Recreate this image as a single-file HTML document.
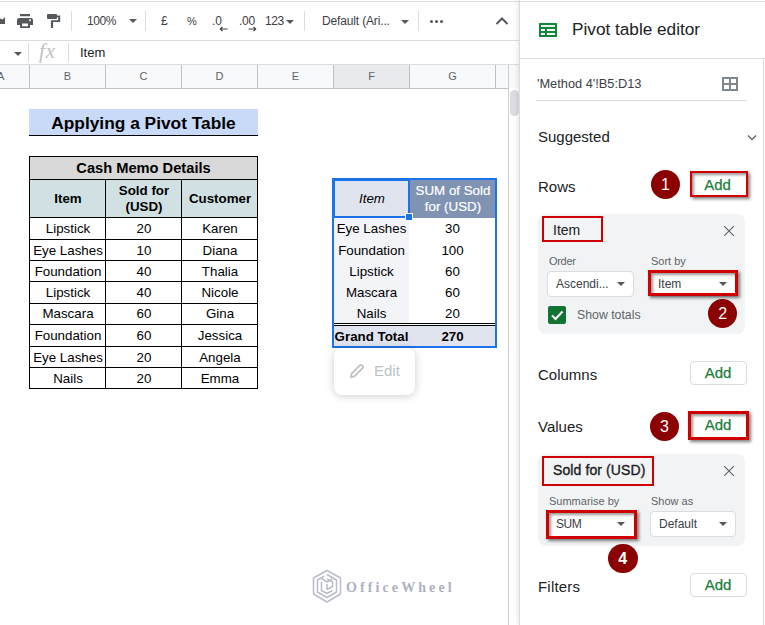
<!DOCTYPE html>
<html><head><meta charset="utf-8">
<style>
*{box-sizing:border-box;margin:0;padding:0}
html,body{width:765px;height:625px;overflow:hidden;background:#fff;font-family:"Liberation Sans",sans-serif;color:#000}
.abs{position:absolute}
#root{position:relative;width:765px;height:625px;overflow:hidden;background:#fff}
/* toolbar */
#tb{left:0;top:0;width:520px;height:41px;background:#fff;border-bottom:1px solid #dadce0}
.tbt{position:absolute;top:13px;font-size:12px;color:#3c4043;line-height:16px;white-space:nowrap}
.sep{position:absolute;top:11px;width:1px;height:20px;background:#dadce0}
.caret{position:absolute;width:0;height:0;border-left:4px solid transparent;border-right:4px solid transparent;border-top:4px solid #55585d}
/* formula bar */
#fb{left:0;top:41px;width:520px;height:24px;background:#fff;border-bottom:1px solid #dadce0}
/* col headers */
#ch{left:0;top:65px;width:509px;height:24px;background:#f8f9fa;border-bottom:1px solid #c0c0c0}
.chd{position:absolute;top:0;height:23px;border-right:1px solid #c0c0c0;font-size:11px;color:#5f6368;text-align:center;line-height:23px}
/* cells */
.c{position:absolute;font-size:13.33px;line-height:16px;text-align:center;white-space:nowrap;color:#000}
.b{font-weight:bold}
.ln{position:absolute;background:#000}
/* sidebar */
#sb{left:520px;top:0;width:245px;height:625px;background:#fff;box-shadow:-1px 0 0 #dadce0,-3px 0 4px rgba(0,0,0,.08)}
.st{position:absolute;font-size:15px;color:#202124;line-height:18px;white-space:nowrap}
.sl{position:absolute;font-size:11px;color:#5f6368;line-height:14px;white-space:nowrap}
.card{position:absolute;background:#f1f3f4;border-radius:8px}
.add{position:absolute;width:57px;height:24px;border:1px solid #dadce0;border-radius:4px;background:#fff;color:#188038;font-size:15px;line-height:22px;text-align:center;-webkit-text-stroke:.25px #188038;padding-right:1px}
.red{position:absolute;border:2px solid #d00000;box-shadow:2px 2px 3px rgba(0,0,0,.5),inset 2px 2px 3px rgba(0,0,0,.4)}
.circ{position:absolute;width:29.600px;height:29.600px;border-radius:50%;background:#8b0000;color:#fff;font-size:16px;line-height:30px;text-align:center}
.sel{position:absolute;height:26px;border:1px solid #dadce0;border-radius:4px;background:#fff;font-size:12px;color:#3c4043;line-height:24px;padding-left:8px}
</style></head><body>
<div id="root">

<!-- toolbar -->
<div id="tb" class="abs">
  <div class="abs" style="left:0;top:1px;width:765px;height:1px;background:#dcdee1"></div>
  <svg class="abs" style="left:0;top:14px" width="6" height="12" viewBox="0 0 6 12"><path d="M0 4.500 L2.500 5.500 L5 3 L5 10 L0 10 Z" fill="#55585d"/></svg>
  <!-- print -->
  <svg class="abs" style="left:17px;top:14px" width="16" height="14" viewBox="0 0 16 14"><path fill="#55585d" fill-rule="evenodd" d="M3 0h10v2.300H3z M2.200 4h11.600A2.200 2.200 0 0 1 16 6.200V11h-3v3H3v-3H0V6.200A2.200 2.200 0 0 1 2.200 4z M5 9.500v2.700h6V9.500z M13 5.300a.9.900 0 1 0 .01 0z"/></svg>
  <!-- paint -->
  <svg class="abs" style="left:47px;top:14px" width="14" height="14" viewBox="0 0 14 14"><path fill="#55585d" d="M1 0h8a1 1 0 0 1 1 1v.500h3.200V8H6.100v6H3.900V6.200h7.300V3.200H10V4a1 1 0 0 1-1 1H1a1 1 0 0 1-1-1V1a1 1 0 0 1 1-1z"/></svg>
  <div class="sep" style="left:71px"></div>
  <div class="tbt" style="left:87px;letter-spacing:-.45px">100%</div>
  <div class="caret" style="left:129px;top:19px"></div>
  <div class="sep" style="left:145px"></div>
  <div class="tbt" style="left:161px">£</div>
  <div class="tbt" style="left:187px;font-size:11px">%</div>
  <div class="tbt" style="left:212px">.0</div>
  <svg class="abs" style="left:219px;top:26px" width="9" height="6" viewBox="0 0 9 6"><path d="M8.500 3H1.500M3.500 .8L1.300 3l2.200 2.200" fill="none" stroke="#3c4043" stroke-width="1.200"/></svg>
  <div class="tbt" style="left:239px;letter-spacing:-.3px">.00</div>
  <svg class="abs" style="left:248px;top:26px" width="9" height="6" viewBox="0 0 9 6"><path d="M.5 3H7.500M5.500 .8L7.700 3L5.500 5.200" fill="none" stroke="#3c4043" stroke-width="1.200"/></svg>
  <div class="tbt" style="left:265px;letter-spacing:-.4px">123</div>
  <div class="caret" style="left:286px;top:20px"></div>
  <div class="sep" style="left:304px"></div>
  <div class="tbt" style="left:322px;letter-spacing:-.15px">Default (Ari...</div>
  <div class="caret" style="left:401px;top:20px"></div>
  <div class="sep" style="left:418px"></div>
  <div class="abs" style="left:430px;top:20px;width:3px;height:3px;border-radius:50%;background:#55585d;box-shadow:5px 0 0 #55585d,10px 0 0 #55585d"></div>
  <svg class="abs" style="left:495px;top:16px" width="14" height="10" viewBox="0 0 14 10"><path d="M1.500 8 L7 2.500 L12.500 8" fill="none" stroke="#55585d" stroke-width="2"/></svg>
</div>

<!-- formula bar -->
<div id="fb" class="abs">
  <div class="caret" style="left:14px;top:11px"></div>
  <div class="abs" style="left:28px;top:2px;width:1px;height:19px;background:#dadce0"></div>
  <div class="abs" style="left:39px;top:-2px;font-family:'Liberation Serif',serif;font-style:italic;font-size:21px;letter-spacing:1px;color:#c2c2c2;line-height:24px">fx</div>
  <div class="abs" style="left:68px;top:2px;width:1px;height:19px;background:#dadce0"></div>
  <div class="abs" style="left:80px;top:4px;font-size:13px;color:#202124;line-height:16px">Item</div>
</div>

<!-- column headers -->
<div id="ch" class="abs">
  <div class="chd" style="left:0;width:30px;text-align:left;text-indent:-3px">A</div>
  <div class="chd" style="left:30px;width:76px">B</div>
  <div class="chd" style="left:106px;width:76px">C</div>
  <div class="chd" style="left:182px;width:76px">D</div>
  <div class="chd" style="left:258px;width:76px">E</div>
  <div class="chd" style="left:334px;width:76px;background:#e8eaed">F</div>
  <div class="chd" style="left:410px;width:86px">G</div>
  <div class="chd" style="left:496px;width:13px;border-right:none"></div>
</div>
<!-- scrollbar -->
<div class="abs" style="left:508px;top:65px;width:12px;height:560px;background:#fff;border-left:1px solid #d0d0d0"></div><div class="abs" style="left:509px;top:65px;width:11px;height:23px;background:#f8f9fa"></div>
<div class="abs" style="left:510px;top:90px;width:9px;height:26px;border-radius:4.500px;background:#dadce0"></div>

<!-- title -->
<div class="abs" style="left:29px;top:109px;width:229px;height:26px;background:#c9daf8"></div>
<div class="ln" style="left:29px;top:135px;width:229px;height:1px"></div>
<div class="c b" style="left:29px;top:113px;width:229px;font-size:17.33px;line-height:20px">Applying a Pivot Table</div>

<!-- table 1 -->
<div class="abs" style="left:29px;top:156px;width:229px;height:24px;background:#d9d9d9"></div>
<div class="abs" style="left:29px;top:180px;width:229px;height:38px;background:#d0e0e3"></div>
<!-- h lines -->
<div class="ln" style="left:29px;top:156px;width:229px;height:1px"></div>
<div class="ln" style="left:29px;top:179px;width:229px;height:1px"></div>
<div class="ln" style="left:29px;top:217px;width:229px;height:1px"></div>
<div class="ln" style="left:29px;top:239px;width:229px;height:1px"></div>
<div class="ln" style="left:29px;top:260px;width:229px;height:1px"></div>
<div class="ln" style="left:29px;top:281px;width:229px;height:1px"></div>
<div class="ln" style="left:29px;top:303px;width:229px;height:1px"></div>
<div class="ln" style="left:29px;top:324px;width:229px;height:1px"></div>
<div class="ln" style="left:29px;top:346px;width:229px;height:1px"></div>
<div class="ln" style="left:29px;top:367px;width:229px;height:1px"></div>
<div class="ln" style="left:29px;top:388px;width:229px;height:1px"></div>
<!-- v lines -->
<div class="ln" style="left:29px;top:156px;width:1px;height:233px"></div>
<div class="ln" style="left:257px;top:156px;width:1px;height:233px"></div>
<div class="ln" style="left:105px;top:179px;width:1px;height:210px"></div>
<div class="ln" style="left:181px;top:179px;width:1px;height:210px"></div>

<div class="c b" style="left:29px;top:160px;width:229px;font-size:14.67px;line-height:17px">Cash Memo Details</div>
<div class="c b" style="left:30px;top:191px;width:76px">Item</div>
<div class="c b" style="left:106px;top:183px;width:76px">Sold for<br>(USD)</div>
<div class="c b" style="left:182px;top:191px;width:76px">Customer</div>

<div class="c" style="left:30px;top:221px;width:76px">Lipstick</div><div class="c" style="left:106px;top:221px;width:76px">20</div><div class="c" style="left:182px;top:221px;width:76px">Karen</div>
<div class="c" style="left:30px;top:243px;width:76px">Eye Lashes</div><div class="c" style="left:106px;top:243px;width:76px">10</div><div class="c" style="left:182px;top:243px;width:76px">Diana</div>
<div class="c" style="left:30px;top:264px;width:76px">Foundation</div><div class="c" style="left:106px;top:264px;width:76px">40</div><div class="c" style="left:182px;top:264px;width:76px">Thalia</div>
<div class="c" style="left:30px;top:285px;width:76px">Lipstick</div><div class="c" style="left:106px;top:285px;width:76px">40</div><div class="c" style="left:182px;top:285px;width:76px">Nicole</div>
<div class="c" style="left:30px;top:306px;width:76px">Mascara</div><div class="c" style="left:106px;top:306px;width:76px">60</div><div class="c" style="left:182px;top:306px;width:76px">Gina</div>
<div class="c" style="left:30px;top:328px;width:76px">Foundation</div><div class="c" style="left:106px;top:328px;width:76px">60</div><div class="c" style="left:182px;top:328px;width:76px">Jessica</div>
<div class="c" style="left:30px;top:350px;width:76px">Eye Lashes</div><div class="c" style="left:106px;top:350px;width:76px">20</div><div class="c" style="left:182px;top:350px;width:76px">Angela</div>
<div class="c" style="left:30px;top:371px;width:76px">Nails</div><div class="c" style="left:106px;top:371px;width:76px">20</div><div class="c" style="left:182px;top:371px;width:76px">Emma</div>

<!-- pivot table -->
<div class="abs" style="left:334px;top:180px;width:76px;height:38px;background:#e0e4ef"></div>
<div class="abs" style="left:410px;top:180px;width:86px;height:38px;background:#8193b3"></div>
<div class="abs" style="left:334px;top:218px;width:75px;height:105px;background:#f3f4f8"></div>
<div class="abs" style="left:334px;top:326px;width:162px;height:20px;background:#e0e4ef"></div>
<div class="ln" style="left:334px;top:323px;width:162px;height:1px"></div>
<div class="ln" style="left:334px;top:325px;width:162px;height:1px"></div>
<div class="c" style="left:334px;top:191px;width:76px;font-style:italic">Item</div>
<div class="c" style="left:410px;top:183px;width:86px;color:#fff;-webkit-text-stroke:.2px #fff">SUM of Sold<br>for (USD)</div>
<div class="c" style="left:333px;top:221px;width:77px">Eye Lashes</div><div class="c" style="left:410px;top:221px;width:85px">30</div>
<div class="c" style="left:333px;top:243px;width:77px">Foundation</div><div class="c" style="left:410px;top:243px;width:85px">100</div>
<div class="c" style="left:333px;top:264px;width:77px">Lipstick</div><div class="c" style="left:410px;top:264px;width:85px">60</div>
<div class="c" style="left:333px;top:284.500px;width:77px">Mascara</div><div class="c" style="left:410px;top:284.500px;width:85px">60</div>
<div class="c" style="left:333px;top:306px;width:77px">Nails</div><div class="c" style="left:410px;top:306px;width:85px">20</div>
<div class="c b" style="left:333px;top:329px;width:77px">Grand Total</div><div class="c b" style="left:410px;top:329px;width:85px">270</div>
<!-- selection borders -->
<div class="abs" style="left:332px;top:178px;width:165px;height:170px;border:2px solid #1a73e8"></div>
<div class="abs" style="left:332px;top:178px;width:78px;height:40px;border:2px solid #1a73e8;border-top-width:3px;border-left-width:3px"></div>
<div class="abs" style="left:405px;top:213px;width:8px;height:8px;background:#1a73e8;border:1px solid #fff"></div>

<!-- edit chip -->
<div class="abs" style="left:334px;top:348px;width:81px;height:47px;background:#fff;border-radius:8px;box-shadow:0 1px 8px rgba(0,0,0,.2)"></div>
<svg class="abs" style="left:349px;top:363px" width="16" height="16" viewBox="0 0 16 16"><path d="M2 14.200 L2.600 10.600 L10.800 2.400 A1.500 1.500 0 0 1 13 2.400 L13.600 3 A1.500 1.500 0 0 1 13.600 5.200 L5.400 13.400 Z" fill="none" stroke="#c0c2c5" stroke-width="1.900" stroke-linejoin="round"/></svg>
<div class="abs" style="left:374px;top:362px;font-size:15px;line-height:18px;color:#bdc1c6">Edit</div>

<!-- watermark -->
<svg class="abs" style="left:311px;top:569px" width="32" height="35" viewBox="0 0 32 35"><g fill="none" stroke="#b9bdcc" stroke-width="1.500" stroke-linejoin="round"><path d="M16 1.500 L29.500 9 L29.500 25 L16 33 L2.500 25 L2.500 9 Z"/><path d="M16 5.500 L25.500 11 L25.500 23 L16 28.500 L6.500 23 L6.500 11 L13 7.200"/><path d="M10.500 13 L10.500 21.500 L16 24.500 L21.500 21.500 M16 10 L21.500 13 L21.500 17.500 L16 20.500 L16 15"/><path d="M10.500 9.500 L16 13 L21 10"/></g></svg>
<div class="abs" style="left:346px;top:579px;font-family:'Liberation Serif',serif;font-weight:bold;font-size:14px;letter-spacing:3.100px;color:#adb2c2;line-height:18px;white-space:nowrap">OfficeWheel</div>

<!-- sidebar -->
<div id="sb" class="abs">
  <!-- coordinates inside are relative to x=520 -->
  <div class="abs" style="left:0;top:1px;width:245px;height:1px;background:#dcdee1"></div>
  <svg class="abs" style="left:19px;top:23px" width="18" height="14" viewBox="0 0 18 14"><rect x="0" y="0" width="18" height="14" rx=".5" fill="#13863a"/><g fill="#fff"><rect x="2" y="2" width="14" height="2" fill="#e4f3e8"/><rect x="2" y="6" width="4" height="2"/><rect x="8" y="6" width="8" height="2"/><rect x="2" y="10" width="4" height="2"/><rect x="8" y="10" width="8" height="2"/></g></svg>
  <div class="abs" style="left:52px;top:19px;font-size:17.200px;line-height:20px;color:#202124;white-space:nowrap">Pivot table editor</div>
  <div class="abs" style="left:0;top:58px;width:245px;height:1px;background:#dadce0"></div>
  <div class="abs" style="left:17px;top:76px;font-size:12.800px;line-height:15px;color:#3c4043;white-space:nowrap">'Method 4'!B5:D13</div>
  <svg class="abs" style="left:202px;top:77px" width="16" height="14" viewBox="0 0 16 14"><path d="M1 1h14v12H1z M8 1v12 M1 7h14" fill="none" stroke="#80868b" stroke-width="2"/></svg>
  <div class="abs" style="left:16px;top:100px;width:211px;height:1px;background:#dadce0"></div>
  <div class="st" style="left:18px;top:128px">Suggested</div>
  <svg class="abs" style="left:227px;top:134px" width="10" height="8" viewBox="0 0 10 8"><path d="M1 1.500 L5 5.500 L9 1.500" fill="none" stroke="#5f6368" stroke-width="1.300"/></svg>

  <div class="st" style="left:18px;top:178px">Rows</div>
  <div class="circ" style="left:130.700px;top:169.800px">1</div>
  <div class="add" style="left:169.500px;top:173px;border-color:transparent;background:none">Add</div>
  <div class="red" style="left:170px;top:171px;width:58px;height:26px;border-width:2px"></div>

  <div class="card" style="left:18px;top:214px;width:207px;height:120px"></div>
  <div class="abs" style="left:33px;top:222px;font-size:14px;line-height:17px;color:#202124">Item</div>
  <div class="red" style="left:22px;top:216px;width:61px;height:26px;box-shadow:none"></div>
  <svg class="abs" style="left:204px;top:226px" width="10" height="10" viewBox="0 0 10 10"><path d="M0 0L10 10M10 0L0 10" stroke="#5f6368" stroke-width="1.100"/></svg>
  <div class="sl" style="left:29px;top:254px;letter-spacing:-.3px">Order</div>
  <div class="sl" style="left:131px;top:254px">Sort by</div>
  <div class="sel" style="left:27px;top:271px;width:87px">Ascendi...</div>
  <div class="caret" style="left:97px;top:282px"></div>
  <div class="sel" style="left:129px;top:271px;width:88px;border-radius:0">Item</div>
  <div class="caret" style="left:199px;top:282px"></div>
  <div class="red" style="left:128px;top:270px;width:90px;height:26px;border-width:3px"></div>
  <div class="abs" style="left:28px;top:306px;width:18px;height:18px;border-radius:2px;background:#137333"></div>
  <svg class="abs" style="left:28px;top:306px" width="18" height="18" viewBox="0 0 18 18"><path d="M4 9.500 L7.500 13 L14.500 5.500" fill="none" stroke="#fff" stroke-width="2"/></svg>
  <div class="abs" style="left:57px;top:308px;font-size:12.300px;line-height:15px;color:#5f6368">Show totals</div>
  <div class="circ" style="left:187.900px;top:298.700px">2</div>

  <div class="st" style="left:18px;top:366px">Columns</div>
  <div class="add" style="left:170px;top:361px">Add</div>

  <div class="st" style="left:18px;top:418px">Values</div>
  <div class="circ" style="left:129.700px;top:411.900px">3</div>
  <div class="add" style="left:170px;top:413px;border-color:transparent;background:none">Add</div>
  <div class="red" style="left:168px;top:411px;width:61px;height:29px;border-width:3px"></div>

  <div class="card" style="left:18px;top:454px;width:207px;height:92px"></div>
  <div class="abs" style="left:33px;top:462px;font-size:14px;line-height:17px;color:#202124;-webkit-text-stroke:.35px #202124;letter-spacing:.1px">Sold for (USD)</div>
  <div class="red" style="left:22px;top:456px;width:112px;height:30px;box-shadow:none"></div>
  <svg class="abs" style="left:204px;top:466px" width="10" height="10" viewBox="0 0 10 10"><path d="M0 0L10 10M10 0L0 10" stroke="#5f6368" stroke-width="1.100"/></svg>
  <div class="sl" style="left:29px;top:494px">Summarise by</div>
  <div class="sl" style="left:131px;top:494px">Show as</div>
  <div class="sel" style="left:28px;top:511px;width:87px;border-radius:0;padding-left:7px;letter-spacing:-.4px">SUM</div>
  <div class="caret" style="left:97px;top:522px"></div>
  <div class="red" style="left:26px;top:510px;width:91px;height:29px;border-width:3px"></div>
  <div class="sel" style="left:130px;top:511px;width:86px">Default</div>
  <div class="caret" style="left:199px;top:522px"></div>

  <div class="circ" style="left:88px;top:543.900px;font-weight:bold">4</div>
  <div class="st" style="left:18px;top:578px;letter-spacing:.2px">Filters</div>
  <div class="add" style="left:170px;top:573px">Add</div>
  <div class="abs" style="left:243px;top:59px;width:1px;height:566px;background:#dadce0"></div>
</div>
</div>
</body></html>
